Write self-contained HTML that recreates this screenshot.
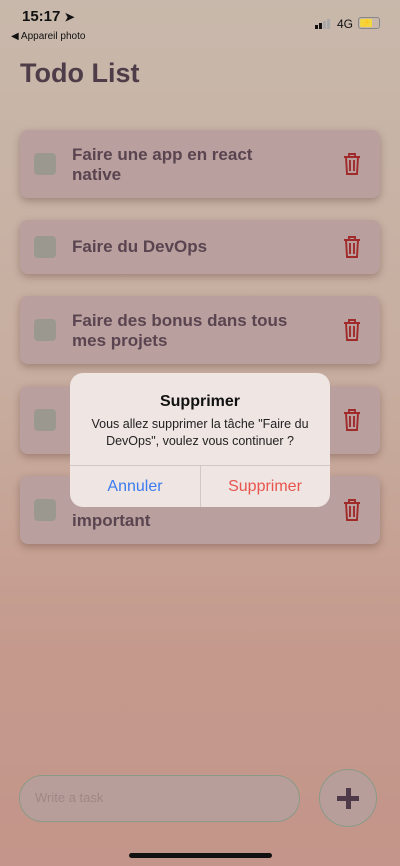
<!DOCTYPE html>
<html><head><meta charset="utf-8"><style>
*{margin:0;padding:0;box-sizing:border-box}
body{width:400px;height:866px;overflow:hidden;position:relative;font-family:"Liberation Sans",sans-serif;background:linear-gradient(#c8b8ab 0%,#c7ad9f 45%,#c59a8d 75%,#c4958a 100%)}
.abs{position:absolute}
.card{position:absolute;left:20px;width:360px;background:#b9a09e;border-radius:8px;box-shadow:0 3px 8px rgba(80,50,40,.35);}
.cb{position:absolute;left:14px;width:22px;height:22px;border-radius:4px;background:#9b9890}
.txt{position:absolute;left:52px;font-weight:bold;font-size:17px;line-height:20px;color:#5a4450}
.trash{position:absolute;right:18px;width:20px;height:24px}
</style></head><body>
<div class="abs" style="left:22px;top:8px;font-size:15px;font-weight:bold;color:#111">15:17 <span style="font-size:12px">➤</span></div>
<div class="abs" style="left:11px;top:31px;font-size:10px;color:#111">◀ Appareil photo</div>
<div class="abs" style="left:315px;top:18px;width:16px;height:12px">
<div class="abs" style="left:0;top:7px;width:3px;height:4px;background:#111"></div>
<div class="abs" style="left:4px;top:5px;width:3px;height:6px;background:#111"></div>
<div class="abs" style="left:8px;top:3px;width:3px;height:8px;background:#aaa"></div>
<div class="abs" style="left:12px;top:1px;width:3px;height:10px;background:#aaa"></div></div>
<div class="abs" style="left:337px;top:17px;font-size:12px;color:#111">4G</div>
<div class="abs" style="left:358px;top:17px;width:22px;height:12px;border:1px solid #888;border-radius:3px;padding:1px"><div style="width:12px;height:8px;background:#f2d640;border-radius:1px;font-size:8px;line-height:8px;text-align:center">⚡</div></div>
<div class="abs" style="left:20px;top:58px;font-size:27px;font-weight:bold;color:#4e3d48">Todo List</div>

<div class="card" style="top:130px;height:68px"><div class="cb" style="top:23px"></div><div class="txt" style="top:15px">Faire une app en react<br>native</div><svg class="trash" style="top:22px" viewBox="0 0 20 24" fill="none" stroke="#a02a2a" stroke-width="1.9"><path d="M2 5h16M7 5V2h6v3M4 5l1 17h10l1-17M8 8v11M12 8v11"/></svg></div>
<div class="card" style="top:220px;height:54px"><div class="cb" style="top:16px"></div><div class="txt" style="top:17px">Faire du DevOps</div><svg class="trash" style="top:15px" viewBox="0 0 20 24" fill="none" stroke="#a02a2a" stroke-width="1.9"><path d="M2 5h16M7 5V2h6v3M4 5l1 17h10l1-17M8 8v11M12 8v11"/></svg></div>
<div class="card" style="top:296px;height:68px"><div class="cb" style="top:23px"></div><div class="txt" style="top:15px">Faire des bonus dans tous<br>mes projets</div><svg class="trash" style="top:22px" viewBox="0 0 20 24" fill="none" stroke="#a02a2a" stroke-width="1.9"><path d="M2 5h16M7 5V2h6v3M4 5l1 17h10l1-17M8 8v11M12 8v11"/></svg></div>
<div class="card" style="top:386px;height:68px"><div class="cb" style="top:23px"></div><svg class="trash" style="top:22px" viewBox="0 0 20 24" fill="none" stroke="#a02a2a" stroke-width="1.9"><path d="M2 5h16M7 5V2h6v3M4 5l1 17h10l1-17M8 8v11M12 8v11"/></svg></div>
<div class="card" style="top:476px;height:68px"><div class="cb" style="top:23px"></div><div class="txt" style="top:35px">important</div><svg class="trash" style="top:22px" viewBox="0 0 20 24" fill="none" stroke="#a02a2a" stroke-width="1.9"><path d="M2 5h16M7 5V2h6v3M4 5l1 17h10l1-17M8 8v11M12 8v11"/></svg></div>

<div class="abs" style="left:70px;top:373px;width:260px;height:134px;background:#efe5e2;border-radius:13px;overflow:hidden">
<div class="abs" style="left:0;top:20px;width:260px;text-align:center;font-size:16px;font-weight:bold;color:#111">Supprimer</div>
<div class="abs" style="left:0;top:43px;width:260px;text-align:center;font-size:12.5px;line-height:17px;color:#222">Vous allez supprimer la tâche "Faire du<br>DevOps", voulez vous continuer ?</div>
<div class="abs" style="left:0;top:92px;width:260px;height:1px;background:#d2c8c5"></div>
<div class="abs" style="left:130px;top:92px;width:1px;height:42px;background:#d2c8c5"></div>
<div class="abs" style="left:0;top:105px;width:130px;text-align:center;font-size:16px;color:#3b7cf0">Annuler</div>
<div class="abs" style="left:130px;top:105px;width:130px;text-align:center;font-size:16px;color:#e8554e">Supprimer</div>
</div>

<div class="abs" style="left:19px;top:775px;width:281px;height:47px;border:1.5px solid #8a9a86;border-radius:24px;background:#b89e9b"></div>
<div class="abs" style="left:35px;top:790px;font-size:13px;color:#9d8785">Write a task</div>
<div class="abs" style="left:319px;top:769px;width:58px;height:58px;border:1.5px solid #8a9a86;border-radius:50%;background:#b89e9b"></div>
<div class="abs" style="left:337px;top:796px;width:22px;height:5px;background:#4e3a48"></div>
<div class="abs" style="left:345.5px;top:788px;width:5px;height:21px;background:#4e3a48"></div>
<div class="abs" style="left:129px;top:853px;width:143px;height:5px;border-radius:3px;background:#111"></div>
</body></html>
